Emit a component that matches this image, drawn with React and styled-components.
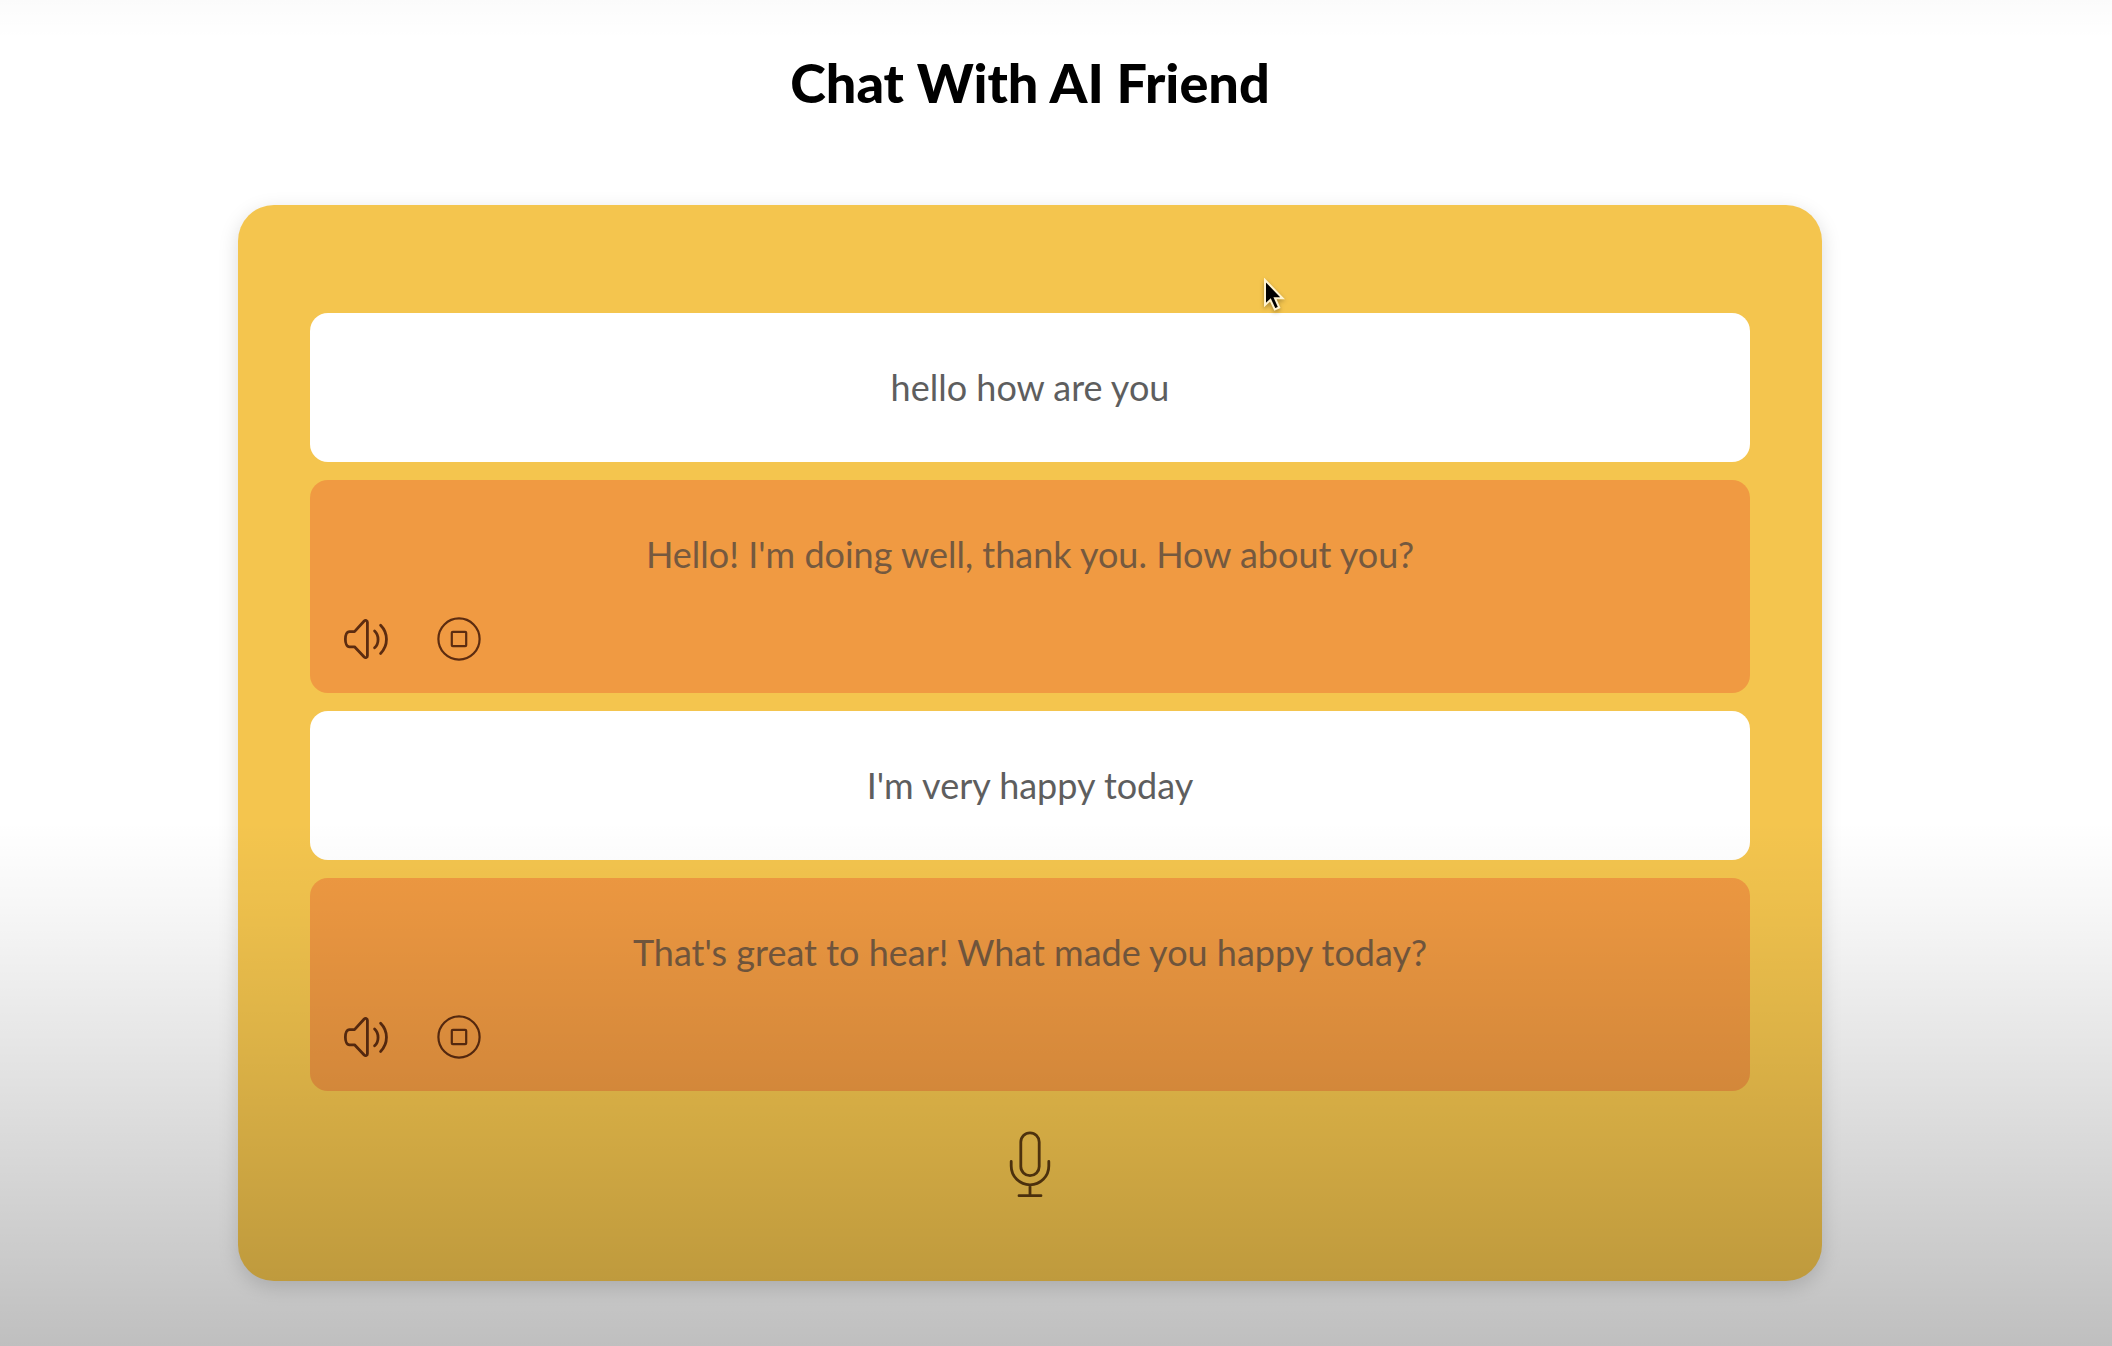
import React from "react";
import styled, { createGlobalStyle } from "styled-components";

const GlobalStyle = createGlobalStyle`
  * {
    box-sizing: border-box;
  }
  body {
    margin: 0;
    background: #ffffff;
    font-family: Lato, "Open Sans", sans-serif;
  }
`;

const Page = styled.div`
  position: relative;
  min-height: 100vh;
  padding: 0 290px 64px 238px;
`;

const Shade = styled.div`
  position: absolute;
  inset: 0;
  pointer-events: none;
  background: linear-gradient(
    rgba(0, 0, 0, 0.015) 0%,
    transparent 3%,
    transparent 61%,
    rgba(0, 0, 0, 0.03) 67%,
    rgba(0, 0, 0, 0.1) 78%,
    rgba(0, 0, 0, 0.17) 88%,
    rgba(0, 0, 0, 0.25) 100%
  );
`;

const Title = styled.h1`
  margin: 0;
  padding: 53px 0 92px;
  color: #000000;
  font-size: 54px;
  font-weight: 900;
  line-height: 60px;
  text-align: center;
`;

const Panel = styled.main`
  position: relative;
  display: flex;
  flex-direction: column;
  gap: 18px;
  padding: 108px 72px 80px;
  border-radius: 36px;
  background: #f4c54e;
  box-shadow: 0 6px 20px rgba(0, 0, 0, 0.15);
`;

const Message = styled.article`
  padding: 52px 32px ${(p) => (p.$bot ? "29px" : "52px")};
  border-radius: 18px;
  background: ${(p) => (p.$bot ? "#f09a42" : "#ffffff")};
`;

const MessageText = styled.p`
  margin: 0;
  color: ${(p) => (p.$bot ? "#75593f" : "#5e5e5e")};
  font-size: 36px;
  line-height: 45px;
  text-align: center;
`;

const Controls = styled.div`
  display: flex;
  gap: 45px;
  margin-top: 38px;
  margin-bottom: 1px;
`;

const IconButton = styled.button`
  display: block;
  padding: 0;
  border: none;
  background: none;
  color: #5c2c10;
  cursor: pointer;

  svg {
    display: block;
  }
`;

const MicButton = styled(IconButton)`
  align-self: center;
  margin-top: 20px;
  color: #5a3a10;
`;

const Pointer = styled.svg`
  position: absolute;
  top: 73px;
  left: 64.7%;
  pointer-events: none;
  filter: drop-shadow(0 2px 2px rgba(0, 0, 0, 0.3));
`;

const SpeakerIcon = () => (
  <svg width="48" height="48" viewBox="0 0 48 48" fill="none" stroke="currentColor" strokeWidth="2.8" strokeLinecap="round" strokeLinejoin="round">
    <path d="M7.500 16.600h5L22.200 6c1.300-1.300 3.200-.600 3.200 1.200v33.600c0 1.800-1.900 2.500-3.200 1.200L12.500 31.800h-5C2 31.800 2 16.600 7.500 16.600Z" />
    <path d="M32.600 16c4.600 4.200 4.600 12.600 0 16.800" />
    <path d="M38.600 10.200c7.800 7.800 7.800 20.400 0 28.200" />
  </svg>
);

const StopIcon = () => (
  <svg width="48" height="48" viewBox="0 0 48 48" fill="none" stroke="currentColor" strokeWidth="2.2">
    <circle cx="24" cy="24" r="20.600" />
    <rect x="16.800" y="16.800" width="14.400" height="14.400" rx="1" />
  </svg>
);

const MicIcon = () => (
  <svg width="48" height="72" viewBox="0 0 48 72" fill="none" stroke="currentColor" strokeWidth="2.8" strokeLinecap="round">
    <rect x="14.800" y="3.800" width="18.400" height="42.800" rx="9.200" />
    <path d="M5.200 32.500V37a18.800 18.800 0 0 0 37.600 0v-4.500M24 55.800v10.900M13 66.700h22" />
  </svg>
);

const messages = [
  { text: "hello how are you" },
  { text: "Hello! I'm doing well, thank you. How about you?", bot: true },
  { text: "I'm very happy today" },
  { text: "That's great to hear! What made you happy today?", bot: true },
];

const ChatMessage = ({ text, bot }) => (
  <Message $bot={bot}>
    <MessageText $bot={bot}>{text}</MessageText>
    {bot && (
      <Controls>
        <IconButton aria-label="Play message">
          <SpeakerIcon />
        </IconButton>
        <IconButton aria-label="Stop message">
          <StopIcon />
        </IconButton>
      </Controls>
    )}
  </Message>
);

export default function App() {
  return (
    <>
      <GlobalStyle />
      <Page>
        <Title>Chat With AI Friend</Title>
        <Panel>
          {messages.map((message) => (
            <ChatMessage key={message.text} {...message} />
          ))}
          <MicButton aria-label="Start speaking">
            <MicIcon />
          </MicButton>
          <Pointer width="22" height="36" viewBox="0 0 22 36">
            <path d="M2 2v25l5.400-5 4.400 9.500 4.400-2-4.200-9.300h7.600Z" fill="#000000" stroke="#fff3cf" strokeWidth="2" />
          </Pointer>
        </Panel>
        <Shade />
      </Page>
    </>
  );
}
